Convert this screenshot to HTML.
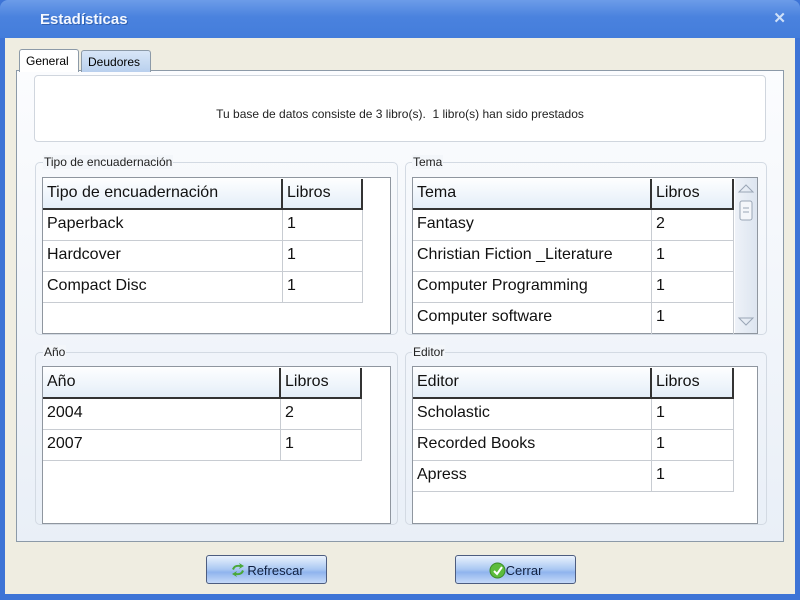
<!DOCTYPE html>
<html><head><meta charset="utf-8"><style>
*{margin:0;padding:0;box-sizing:border-box}
body{width:800px;height:600px;overflow:hidden;background:#3d74d6;font-family:"Liberation Sans",sans-serif;position:relative}
.a{position:absolute}
#title{left:0;top:0;width:800px;height:38px;background:linear-gradient(#6c9ce8,#4a82de 45%,#447ddb);border-radius:8px 8px 0 0}
#title span{position:absolute;left:40px;top:11px;color:#f4f8ff;font-weight:bold;font-size:15px;text-shadow:1px 1px 0 #3060b0}
#x{right:14px;top:9px;color:#cfe0f8;font-size:15px;font-weight:bold}
#body{left:5px;top:38px;width:790px;height:556px;background:#efede1}
#panel{left:16px;top:70px;width:768px;height:472px;border:1px solid #8c9aa8;background:linear-gradient(#fbfcfe,#e9eff7)}
.tab{top:49px;height:22px;font-size:12px;padding:4px 0 0 6px;border:1px solid #8c9aa8;border-bottom:none;border-radius:3px 3px 0 0}
#info{left:34px;top:75px;width:732px;height:67px;background:#fff;border:1px solid #d0d6de;border-radius:4px;font-size:12px;text-align:center;padding-top:31px;color:#222}
.grp{border:1px solid #d3dae3;border-radius:5px}
.lg{font-size:12px;color:#222;background:#f3f6fa;padding:0 1px}
.tbl{border:1px solid #8f969f;background:#fff}
.hd{position:absolute;top:1px;height:31px;background:linear-gradient(#fdfeff,#e4eef8);border-bottom:2px solid #333;font-size:16px;padding:5px 0 0 4px;color:#111}
.c{position:absolute;height:31px;border-bottom:1px solid #c8ccd2;border-right:1px solid #c8ccd2;font-size:16px;padding:5px 0 0 4px;color:#111}
.btn{top:555px;width:121px;height:29px;border:1px solid #4d5d80;border-radius:3px;background:linear-gradient(#eaf2fd,#a9c7f2 50%,#8fb4ee 60%,#c5daf8);font-size:13px;color:#102040;text-align:center;padding-top:6px}
</style></head><body>
<div id="title" class="a"><span>Estadísticas</span></div>
<div id="x" class="a">✕</div>
<div id="body" class="a"></div>
<div id="panel" class="a"></div>
<div class="a tab" style="left:19px;width:60px;background:#fff;height:23px">General</div>
<div class="a tab" style="left:81px;width:70px;top:50px;background:linear-gradient(#d8e6f7,#b9d0ee)">Deudores</div>
<div id="info" class="a">Tu base de datos consiste de 3 libro(s).&nbsp;&nbsp;1 libro(s) han sido prestados</div>

<div class="a grp" style="left:35px;top:162px;width:363px;height:173px"></div>
<div class="a lg" style="left:43px;top:155px">Tipo de encuadernación</div>
<div class="a tbl" style="left:42px;top:177px;width:349px;height:157px">
<div class="hd" style="left:0;width:240px;border-right:2px solid #333">Tipo de encuadernación</div>
<div class="hd" style="left:240px;width:80px;border-right:2px solid #333">Libros</div>
<div class="c" style="left:0;top:32px;width:240px">Paperback</div><div class="c" style="left:240px;top:32px;width:80px">1</div>
<div class="c" style="left:0;top:63px;width:240px">Hardcover</div><div class="c" style="left:240px;top:63px;width:80px">1</div>
<div class="c" style="left:0;top:94px;width:240px">Compact Disc</div><div class="c" style="left:240px;top:94px;width:80px">1</div>
</div>

<div class="a grp" style="left:405px;top:162px;width:362px;height:173px"></div>
<div class="a lg" style="left:412px;top:155px">Tema</div>
<div class="a tbl" style="left:412px;top:177px;width:346px;height:157px">
<div class="hd" style="left:0;width:239px;border-right:2px solid #333">Tema</div>
<div class="hd" style="left:239px;width:82px;border-right:2px solid #333">Libros</div>
<div class="c" style="left:0;top:32px;width:239px">Fantasy</div><div class="c" style="left:239px;top:32px;width:82px">2</div>
<div class="c" style="left:0;top:63px;width:239px">Christian Fiction _Literature</div><div class="c" style="left:239px;top:63px;width:82px">1</div>
<div class="c" style="left:0;top:94px;width:239px">Computer Programming</div><div class="c" style="left:239px;top:94px;width:82px">1</div>
<div class="c" style="left:0;top:125px;width:239px;border-bottom:none">Computer software</div><div class="c" style="left:239px;top:125px;width:82px;border-bottom:none">1</div>
<div class="a" style="left:322px;top:0;width:22px;height:155px;background:linear-gradient(90deg,#eef2f8,#dde5f0)">
<svg width="22" height="155" style="position:absolute;left:0;top:0"><path d="M4 14 L11 7 L18 14 Z" fill="none" stroke="#9aa6b6"/><rect x="5" y="23" width="12" height="19" rx="2" fill="#f4f6fa" stroke="#9aa6b6"/><path d="M8 30h6M8 34h6" stroke="#9aa6b6"/><path d="M4 140 L11 147 L18 140 Z" fill="none" stroke="#9aa6b6"/></svg></div>
</div>

<div class="a grp" style="left:35px;top:352px;width:363px;height:173px"></div>
<div class="a lg" style="left:43px;top:345px">Año</div>
<div class="a tbl" style="left:42px;top:366px;width:349px;height:158px">
<div class="hd" style="left:0;width:238px;border-right:2px solid #333">Año</div>
<div class="hd" style="left:238px;width:81px;border-right:2px solid #333">Libros</div>
<div class="c" style="left:0;top:32px;width:238px">2004</div><div class="c" style="left:238px;top:32px;width:81px">2</div>
<div class="c" style="left:0;top:63px;width:238px">2007</div><div class="c" style="left:238px;top:63px;width:81px">1</div>
</div>

<div class="a grp" style="left:405px;top:352px;width:362px;height:173px"></div>
<div class="a lg" style="left:412px;top:345px">Editor</div>
<div class="a tbl" style="left:412px;top:366px;width:346px;height:158px">
<div class="hd" style="left:0;width:239px;border-right:2px solid #333">Editor</div>
<div class="hd" style="left:239px;width:82px;border-right:2px solid #333">Libros</div>
<div class="c" style="left:0;top:32px;width:239px">Scholastic</div><div class="c" style="left:239px;top:32px;width:82px">1</div>
<div class="c" style="left:0;top:63px;width:239px">Recorded Books</div><div class="c" style="left:239px;top:63px;width:82px">1</div>
<div class="c" style="left:0;top:94px;width:239px">Apress</div><div class="c" style="left:239px;top:94px;width:82px">1</div>
</div>

<div class="a btn" style="left:206px"><svg width="18" height="16" style="vertical-align:-3px"><path d="M3 7 Q5 2 11 3 L10 1 L15 4 L10 7 L11 5 Q6 4 5 8Z" fill="#4aa83a"/><path d="M15 9 Q13 14 7 13 L8 15 L3 12 L8 9 L7 11 Q12 12 13 8Z" fill="#4aa83a"/></svg>Refrescar</div>
<div class="a btn" style="left:455px"><svg width="17" height="17" style="vertical-align:-4px"><circle cx="8.5" cy="8.5" r="7.5" fill="#5cbc3c" stroke="#3a8a2a"/><path d="M5 9 L8 12 L13 5" stroke="#fff" stroke-width="2" fill="none"/></svg>Cerrar</div>
</body></html>
